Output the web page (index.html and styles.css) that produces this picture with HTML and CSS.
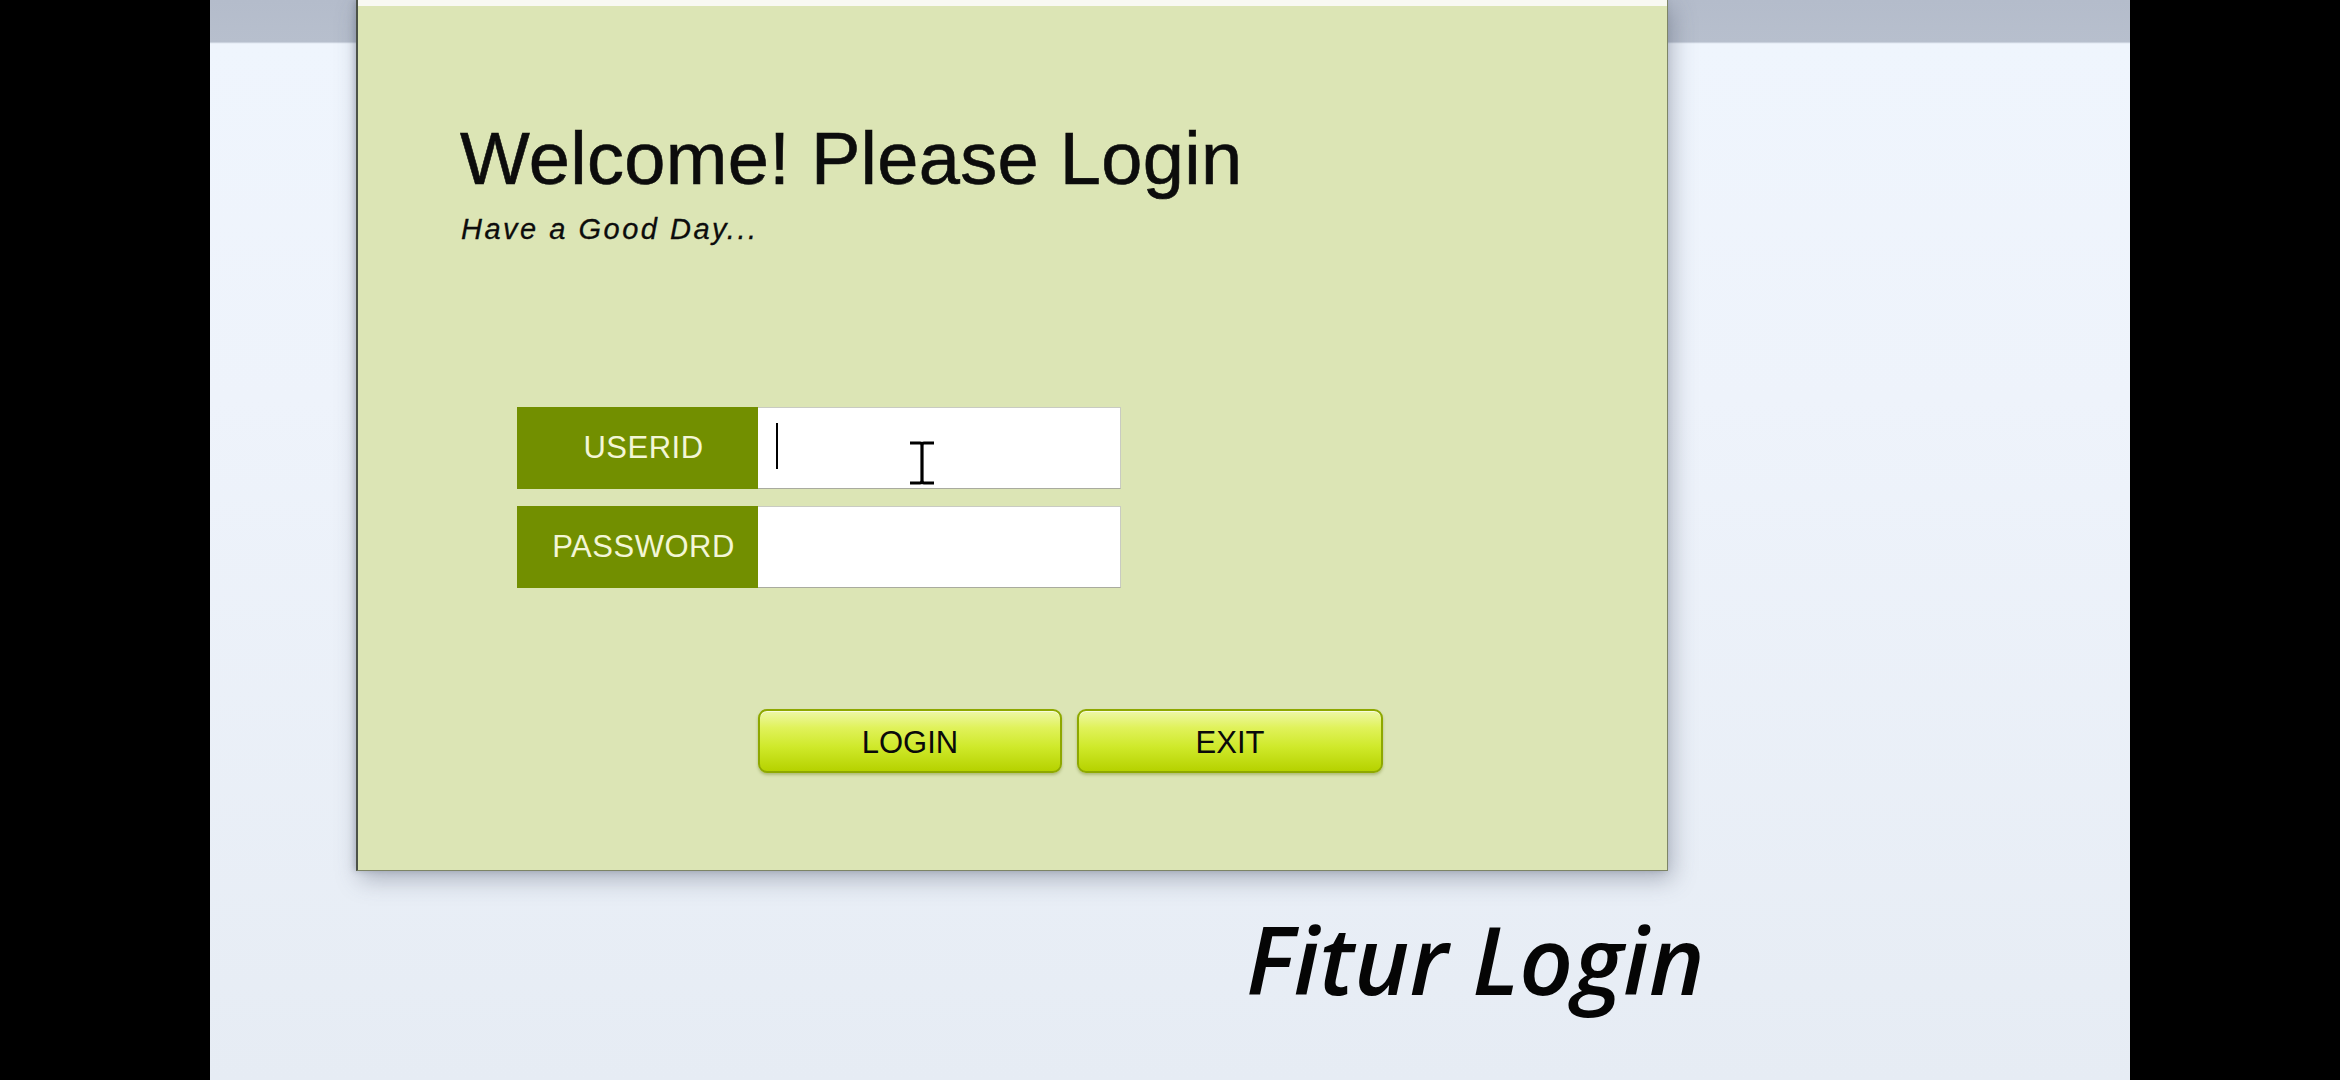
FILE: index.html
```html
<!DOCTYPE html>
<html lang="id">
<head>
<meta charset="utf-8">
<title>Fitur Login</title>
<link rel="stylesheet" href="styles.css">
</head>
<body>
<div class="screen">
  <div class="letterbox"></div>
  <main class="desktop">
    <section class="window">
      <div class="win-strip"></div>
      <div class="win-body">
        <h1 class="title">Welcome! Please Login</h1>
        <p class="subtitle">Have a Good Day...</p>
        <form class="fields">
          <div class="row">
            <span class="label">USERID</span>
            <div class="input">
              <span class="caret"></span>
              <svg class="ibeam" width="26" height="44" viewBox="0 0 26 44">
                <path d="M1 2 H11 Q13 2 13 5 V39 Q13 42 11 42 H1 M25 2 H15 Q13 2 13 5 M13 39 Q13 42 15 42 H25" fill="none" stroke="#000" stroke-width="3.2"/>
              </svg>
            </div>
          </div>
          <div class="row">
            <span class="label">PASSWORD</span>
            <div class="input"></div>
          </div>
        </form>
        <div class="buttons">
          <button type="button" class="btn">LOGIN</button>
          <button type="button" class="btn btn-exit">EXIT</button>
        </div>
      </div>
    </section>
    <div class="caption">Fitur Login</div>
  </main>
  <div class="letterbox"></div>
</div>
</body>
</html>
```

FILE: styles.css
```css
* { box-sizing: border-box; }

html, body {
  margin: 0;
  padding: 0;
  background: #000;
  overflow: hidden;
}

.screen {
  display: flex;
  width: 2340px;
  height: 1080px;
}

.letterbox {
  width: 210px;
  flex: none;
  background: #000;
}

.desktop {
  width: 1920px;
  flex: none;
  height: 1080px;
  display: flex;
  flex-direction: column;
  align-items: flex-start;
  background:
    linear-gradient(to bottom, #b4bccb 0, #b7bfcd 42px, #dfe6f0 43px, #eff5fd 44px, #eef3fb 400px, #e6ecf4 1080px);
  overflow: hidden;
}

.window {
  margin-left: 146px;
  width: 1312px;
  height: 871px;
  flex: none;
  background: #dce5b5;
  border-left: 2px solid #4c5248;
  border-right: 1px solid #7d8466;
  border-bottom: 1px solid #7d8466;
  box-shadow: 4px 8px 22px rgba(70, 80, 100, 0.38), -2px 0 6px rgba(70, 80, 100, 0.25);
  display: flex;
  flex-direction: column;
}

.win-strip {
  height: 6px;
  background: #f8f9f2;
  flex: none;
}

.win-body {
  flex: 1;
  display: flex;
  flex-direction: column;
  align-items: flex-start;
  font-family: "Liberation Sans", Arial, sans-serif;
  color: #0c0c0c;
}

.title {
  margin: 116px 0 0 102px;
  font-size: 74px;
  line-height: 74px;
  font-weight: 400;
  letter-spacing: 0.3px;
  -webkit-text-stroke: 0.6px #0c0c0c;
}

.subtitle {
  margin: 19px 0 0 103px;
  font-size: 29px;
  line-height: 29px;
  font-style: italic;
  letter-spacing: 2.5px;
  -webkit-text-stroke: 0.3px #0c0c0c;
}

.fields {
  margin: 163px 0 0 159px;
  display: flex;
  flex-direction: column;
  gap: 17px;
}

.row {
  display: flex;
  height: 82px;
}

.label {
  width: 241px;
  background: #728f00;
  color: #f3f6d6;
  font-size: 31px;
  letter-spacing: 0.5px;
  display: flex;
  align-items: center;
  justify-content: center;
  padding-left: 12px;
}

.input {
  position: relative;
  width: 363px;
  background: #fff;
  border: 1px solid #c9cbc2;
  border-bottom-color: #a9ab9f;
  border-left: none;
}

.caret {
  position: absolute;
  left: 18px;
  top: 15px;
  width: 2px;
  height: 46px;
  background: #000;
}

.ibeam {
  position: absolute;
  left: 151px;
  top: 33px;
}

.buttons {
  margin: 121px 0 0 400px;
  display: flex;
  gap: 15px;
}

.btn {
  width: 304px;
  height: 64px;
  border: 2px solid #8ea800;
  border-radius: 9px;
  background: linear-gradient(to bottom, #eef7a8 0%, #e0f25a 28%, #cfe92a 60%, #b6d200 100%);
  box-shadow: 0 2px 3px rgba(90, 110, 0, 0.35), inset 0 1px 0 rgba(255, 255, 255, 0.6);
  font-family: "Liberation Sans", Arial, sans-serif;
  font-size: 31px;
  color: #0a0a0a;
  padding: 4px 0 0;
}

.btn-exit {
  width: 306px;
}

.caption {
  margin: 41px 0 0 1036px;
  font-family: "Open Sans", "Noto Sans", sans-serif;
  font-style: italic;
  font-weight: 600;
  font-size: 94px;
  line-height: 94px;
  color: #050505;
}
```
